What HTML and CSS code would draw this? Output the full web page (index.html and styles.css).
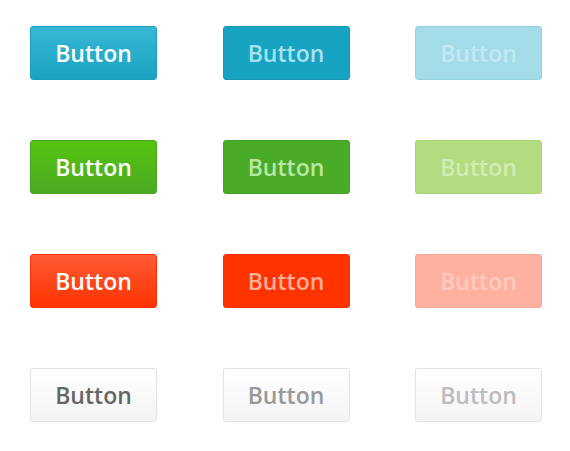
FILE: index.html
```html
<!DOCTYPE html>
<html>
<head>
<meta charset="utf-8">
<link rel="stylesheet" href="styles.css">
</head>
<body>
<div class="grid">
  <div class="btn blue">Button</div>
  <div class="btn blue hover">Button</div>
  <div class="btn blue disabled">Button</div>
  <div class="btn green">Button</div>
  <div class="btn green hover">Button</div>
  <div class="btn green disabled">Button</div>
  <div class="btn red">Button</div>
  <div class="btn red hover">Button</div>
  <div class="btn red disabled">Button</div>
  <div class="btn white">Button</div>
  <div class="btn white hover">Button</div>
  <div class="btn white disabled">Button</div>
</div>
</body>
</html>
```
FILE: styles.css
```css
html, body {
  margin: 0;
  padding: 0;
  background: #ffffff;
}
.grid {
  display: grid;
  grid-template-columns: repeat(3, 127px);
  grid-auto-rows: 54px;
  column-gap: 65.5px;
  row-gap: 60px;
  padding: 26px 0 0 30px;
}
.btn {
  box-sizing: border-box;
  display: flex;
  align-items: center;
  justify-content: center;
  border-radius: 3px;
  border: 1px solid transparent;
  font-family: "Open Sans", sans-serif;
  font-weight: 600;
  font-size: 23px;
  color: #ffffff;
}
.blue {
  background: linear-gradient(#37b7d4, #1ba3c3);
  border-color: #1c9fbf;
}
.blue.hover {
  background: #17a3c2;
  border-color: #1599b7;
  color: #a8e1ee;
}
.blue.disabled {
  background: #a3dbe8;
  border-color: #92d2e1;
  color: #c2e9f2;
}
.green {
  background: linear-gradient(#56c40f, #4aaa24);
  border-color: #48a522;
}
.green.hover {
  background: #4aab29;
  border-color: #45a126;
  color: #b9e6a4;
}
.green.disabled {
  background: #b3dc80;
  border-color: #a8d574;
  color: #d0ecb4;
}
.red {
  background: linear-gradient(#ff5a36, #ff3300);
  border-color: #f53100;
}
.red.hover {
  background: #ff3300;
  border-color: #f23000;
  color: #ffae9b;
}
.red.disabled {
  background: #ffb19f;
  border-color: #fba693;
  color: #ffcbbe;
}
.white {
  background: linear-gradient(#ffffff, #f4f4f4);
  border-color: #e3e3e3;
  color: #666666;
}
.white.hover {
  color: #999999;
}
.white.disabled {
  color: #bdbdbd;
}
```
